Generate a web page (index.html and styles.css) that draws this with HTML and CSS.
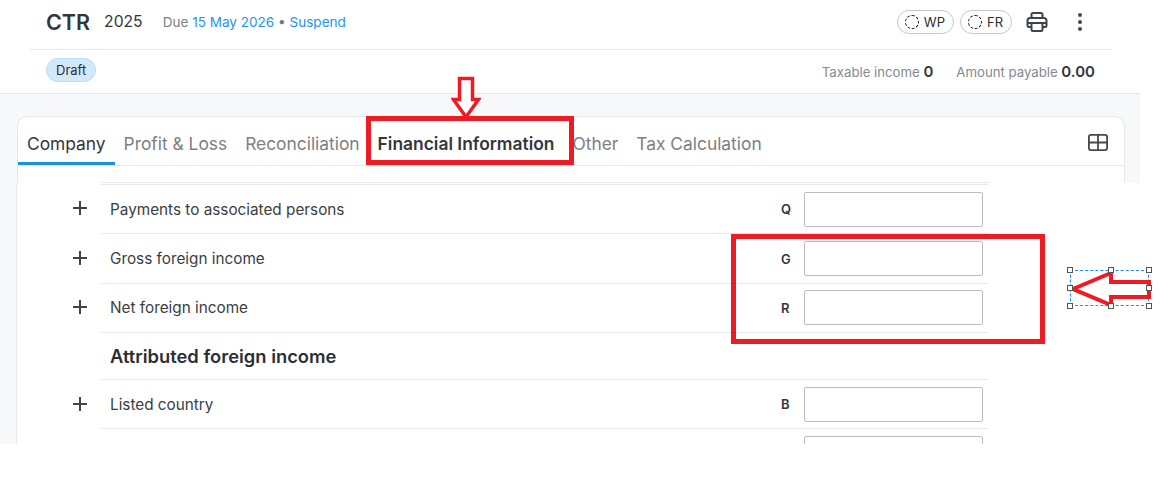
FILE: index.html
```html
<!DOCTYPE html>
<html lang="en">
<head>
    <meta charset="UTF-8">
    <meta name="viewport" content="width=device-width, initial-scale=1.0">
    <title>CTR 2025</title>
    <link rel="stylesheet" href="styles.css">
</head>
<body>
    <div class="page">
        <header class="header">
            <div class="title-row">
                <h1 class="title">CTR</h1>
                <span class="year">2025</span>
                <span class="due">Due <a class="link">15 May 2026</a> <b class="dot">•</b> <a class="link">Suspend</a></span>
                <div class="actions">
                    <span class="chip"><i class="chip-ring"></i>WP</span>
                    <span class="chip"><i class="chip-ring"></i>FR</span>
                    <svg class="icon-print" width="24" height="24" viewBox="0 0 24 24" fill="none" stroke="#3f4448" stroke-width="2">
                        <path d="M6.5 8V4.500A1.500 1.500 0 0 1 8 3h8a1.500 1.500 0 0 1 1.500 1.500V8"/>
                        <path d="M6.5 17H4a1.5 1.5 0 0 1-1.5-1.5v-5A2.500 2.500 0 0 1 5 8h14a2.500 2.500 0 0 1 2.500 2.500v5A1.500 1.500 0 0 1 20 17h-2.500"/>
                        <path d="M2.500 13h19"/>
                        <path d="M6.500 13v6.500A1.500 1.500 0 0 0 8 21h8a1.500 1.500 0 0 0 1.500-1.500V13"/>
                    </svg>
                    <span class="more"><i></i><i></i><i></i></span>
                </div>
            </div>
            <div class="status-row">
                <span class="draft">Draft</span>
                <div class="totals">
                    <span class="total">Taxable income <strong>0</strong></span>
                    <span class="total">Amount payable <strong>0.00</strong></span>
                </div>
            </div>
        </header>

        <section class="main">
            <div class="card">
                <nav class="tabs">
                    <a class="tab tab-active">Company</a>
                    <a class="tab">Profit &amp; Loss</a>
                    <a class="tab">Reconciliation</a>
                    <a class="tab tab-current">Financial Information</a>
                    <a class="tab">Other</a>
                    <a class="tab">Tax Calculation</a>
                    <svg class="icon-grid" width="20" height="17" viewBox="0 0 20 17" fill="none" stroke="#44494d" stroke-width="1.800">
                        <rect x="0.900" y="0.900" width="18.200" height="15.200" rx="2"/>
                        <path d="M10 1v15M1 8.500h18"/>
                    </svg>
                </nav>
                <div class="card-gap"></div>
            </div>
        </section>

        <section class="lower">
            <div class="strip"></div>
            <div class="rows">
                <div class="row">
                    <span class="plus"></span>
                    <div class="row-main"><span class="row-label">Payments to associated persons</span><span class="code">Q</span><input class="field" type="text"></div>
                </div>
                <div class="row">
                    <span class="plus"></span>
                    <div class="row-main"><span class="row-label">Gross foreign income</span><span class="code">G</span><input class="field" type="text"></div>
                </div>
                <div class="row">
                    <span class="plus"></span>
                    <div class="row-main"><span class="row-label">Net foreign income</span><span class="code">R</span><input class="field" type="text"></div>
                </div>
                <div class="row">
                    <span class="plus plus-none"></span>
                    <div class="row-main row-heading"><span class="row-label">Attributed foreign income</span></div>
                </div>
                <div class="row">
                    <span class="plus"></span>
                    <div class="row-main"><span class="row-label">Listed country</span><span class="code">B</span><input class="field" type="text"></div>
                </div>
                <div class="row">
                    <span class="plus plus-none"></span>
                    <div class="row-main"><span class="row-label"></span><input class="field" type="text"></div>
                </div>
            </div>
        </section>

        <!-- Annotations drawn on top of the screenshot -->
        <div class="mark mark-tab"></div>
        <div class="mark mark-fields"></div>
        <svg class="arrow-down" width="30" height="44" viewBox="0 0 30 44">
            <path d="M8.500 2.500h13v21h6L15 41 2.500 23.500h6z" fill="#fff" stroke="#ed1c24" stroke-width="3.500"/>
        </svg>
        <div class="selection">
            <svg class="arrow-left" width="82" height="38" viewBox="0 0 82 38">
                <path d="M3 19 41 3v9h38v15H41v8z" fill="#fff" stroke="#ed1c24" stroke-width="4"/>
            </svg>
            <i class="handle h-tl"></i><i class="handle h-tc"></i><i class="handle h-tr"></i>
            <i class="handle h-ml"></i><i class="handle h-mr"></i>
            <i class="handle h-bl"></i><i class="handle h-bc"></i><i class="handle h-br"></i>
        </div>
    </div>
</body>
</html>
```

FILE: styles.css
```css
* {
    box-sizing: border-box;
}
html, body {
    margin: 0;
    background-color: #fff;
}
body {
    font-family: Inter, "Liberation Sans", sans-serif;
    color: #2b2f33;
    overflow: hidden;
}
.page {
    position: relative;
    width: 1165px;
    height: 504px;
    overflow: hidden;
}

/* header */
.header {
    width: 1140px;
    height: 94px;
    padding: 0 29px 0 30px;
    border-bottom: 1px solid #e4e6e8;
}
.title-row {
    display: flex;
    align-items: center;
    height: 50px;
    padding: 0 0 6px 16px;
    border-bottom: 1px solid #e6e7e9;
}
.title {
    margin: 0 14px 0 0;
    font-size: 21.500px;
    font-weight: 600;
    color: #33373b;
}
.year {
    margin-right: 20px;
    font-size: 15.700px;
    color: #33373b;
}
.due {
    font-size: 13.550px;
    color: #7d8186;
}
.link {
    color: #2196f3;
}
.dot {
    font-weight: 400;
    color: #777;
}
.actions {
    display: flex;
    align-items: center;
    margin-left: auto;
}
.chip {
    display: flex;
    align-items: center;
    gap: 5px;
    height: 24px;
    padding: 0 8px 0 7px;
    margin-left: 6px;
    border: 1px solid #c4c7ca;
    border-radius: 12px;
    font-size: 13px;
    color: #2b2f33;
}
.chip-ring {
    width: 14px;
    height: 14px;
    border: 1px dashed #111;
    border-radius: 50%;
}
.icon-print {
    margin-left: 12.500px;
}
.more {
    display: flex;
    flex-direction: column;
    gap: 3px;
    margin: 0 29px 0 29.500px;
}
.more i {
    width: 4px;
    height: 4px;
    border-radius: 50%;
    background-color: #44494d;
}
.status-row {
    display: flex;
    align-items: center;
    justify-content: space-between;
    height: 43px;
    padding: 0 16px;
}
.draft {
    display: flex;
    align-items: center;
    height: 24px;
    margin-top: -3px;
    padding: 0 9px;
    border: 1px solid #b9def7;
    border-radius: 12px;
    background-color: #d3e9fa;
    font-size: 13px;
}
.totals {
    display: flex;
    gap: 23px;
}
.total {
    font-size: 13.200px;
    color: #85898e;
}
.total strong {
    font-size: 15px;
    font-weight: 600;
    color: #33373b;
}

/* tabs card */
.main {
    width: 1140px;
    height: 89px;
    padding: 22px 15px 0 17px;
    background-color: #f7f8fa;
}
.card {
    height: 67px;
    border: 1px solid #e6e8ea;
    border-bottom: 0;
    border-radius: 10px 10px 0 0;
    background-color: #fff;
}
.tabs {
    display: flex;
    align-items: stretch;
    height: 49px;
    border-bottom: 1px solid #e6e8ea;
}
.tab {
    display: flex;
    align-items: center;
    height: 48px;
    padding: 8px 9px 0;
    border-bottom: 3px solid transparent;
    font-size: 17.380px;
    color: #7b7f84;
}
.tab-active {
    border-bottom-color: #1a8fe3;
    color: #33373b;
}
.tab-current {
    border-bottom-color: #1a8fe3;
    font-size: 17.420px;
    font-weight: 600;
    color: #33373b;
}
.icon-grid {
    align-self: center;
    margin: 2px 16px 0 auto;
}
.card-gap {
    height: 17px;
    margin-left: 83px;
    width: 888px;
    border-bottom: 1px solid #e6e7e9;
}

/* pasted lower part */
.lower {
    display: flex;
    height: 261px;
    padding-top: 1px;
    overflow: hidden;
}
.strip {
    flex: none;
    width: 17px;
    margin-top: -1px;
    border-right: 1px solid #e6e8ea;
    background-color: #f7f8fa;
}
.rows {
    width: 971px;
    padding-left: 55px;
}
.row {
    display: flex;
}
.plus {
    position: relative;
    flex: none;
    width: 29px;
}
.plus::before, .plus::after {
    content: "";
    position: absolute;
    background-color: #3f4448;
}
.plus::before {
    left: 1px;
    top: 23px;
    width: 14px;
    height: 1.500px;
}
.plus::after {
    left: 7.250px;
    top: 17px;
    width: 1.500px;
    height: 14px;
}
.row:nth-child(3) .plus::before {
    top: 22px;
}
.row:nth-child(3) .plus::after {
    top: 16px;
}
.plus-none::before, .plus-none::after {
    display: none;
}
.row-main {
    flex: 1;
    display: flex;
    align-items: center;
    height: 49px;
    padding: 0 5px 0 9px;
    border-bottom: 1px solid #e6e7e9;
}
.row:first-child .row-main {
    height: 50px;
    border-top: 1px solid #e6e7e9;
}
.row:nth-child(2) .row-main {
    height: 50px;
}
.row:nth-child(3) .row-main {
    padding-bottom: 1px;
}
.row-heading {
    height: 47px;
}
.row-label {
    flex: 1;
    font-size: 15.300px;
    color: #3a3e42;
}
.row-heading .row-label {
    font-size: 18.350px;
    font-weight: 600;
    color: #2b2f33;
}
.code {
    width: 23px;
    font-size: 13px;
    font-weight: 600;
    color: #33373b;
}
.field {
    width: 179px;
    height: 35px;
    border: 1px solid #bcbcbc;
    border-radius: 2px;
    background-color: #fff;
}

/* annotations */
.mark {
    position: absolute;
    border: 5px solid #ed1c24;
}
.mark-tab {
    left: 366px;
    top: 116px;
    width: 208px;
    height: 49px;
}
.mark-fields {
    left: 731px;
    top: 234px;
    width: 314px;
    height: 110px;
}
.arrow-down {
    position: absolute;
    left: 451px;
    top: 76px;
}
.selection {
    position: absolute;
    left: 1070px;
    top: 270px;
    width: 79px;
    height: 36px;
    border: 1px dashed #1a8fe3;
}
.arrow-left {
    position: absolute;
    left: -1px;
    top: -1px;
}
.handle {
    position: absolute;
    width: 6px;
    height: 6px;
    border: 1px solid #555;
    background-color: #fff;
}
.h-tl { left: -4px; top: -4px; }
.h-tc { left: 37px; top: -4px; }
.h-tr { right: -4px; top: -4px; }
.h-ml { left: -4px; top: 14px; }
.h-mr { right: -4px; top: 14px; }
.h-bl { left: -4px; bottom: -4px; }
.h-bc { left: 37px; bottom: -4px; }
.h-br { right: -4px; bottom: -4px; }
```
